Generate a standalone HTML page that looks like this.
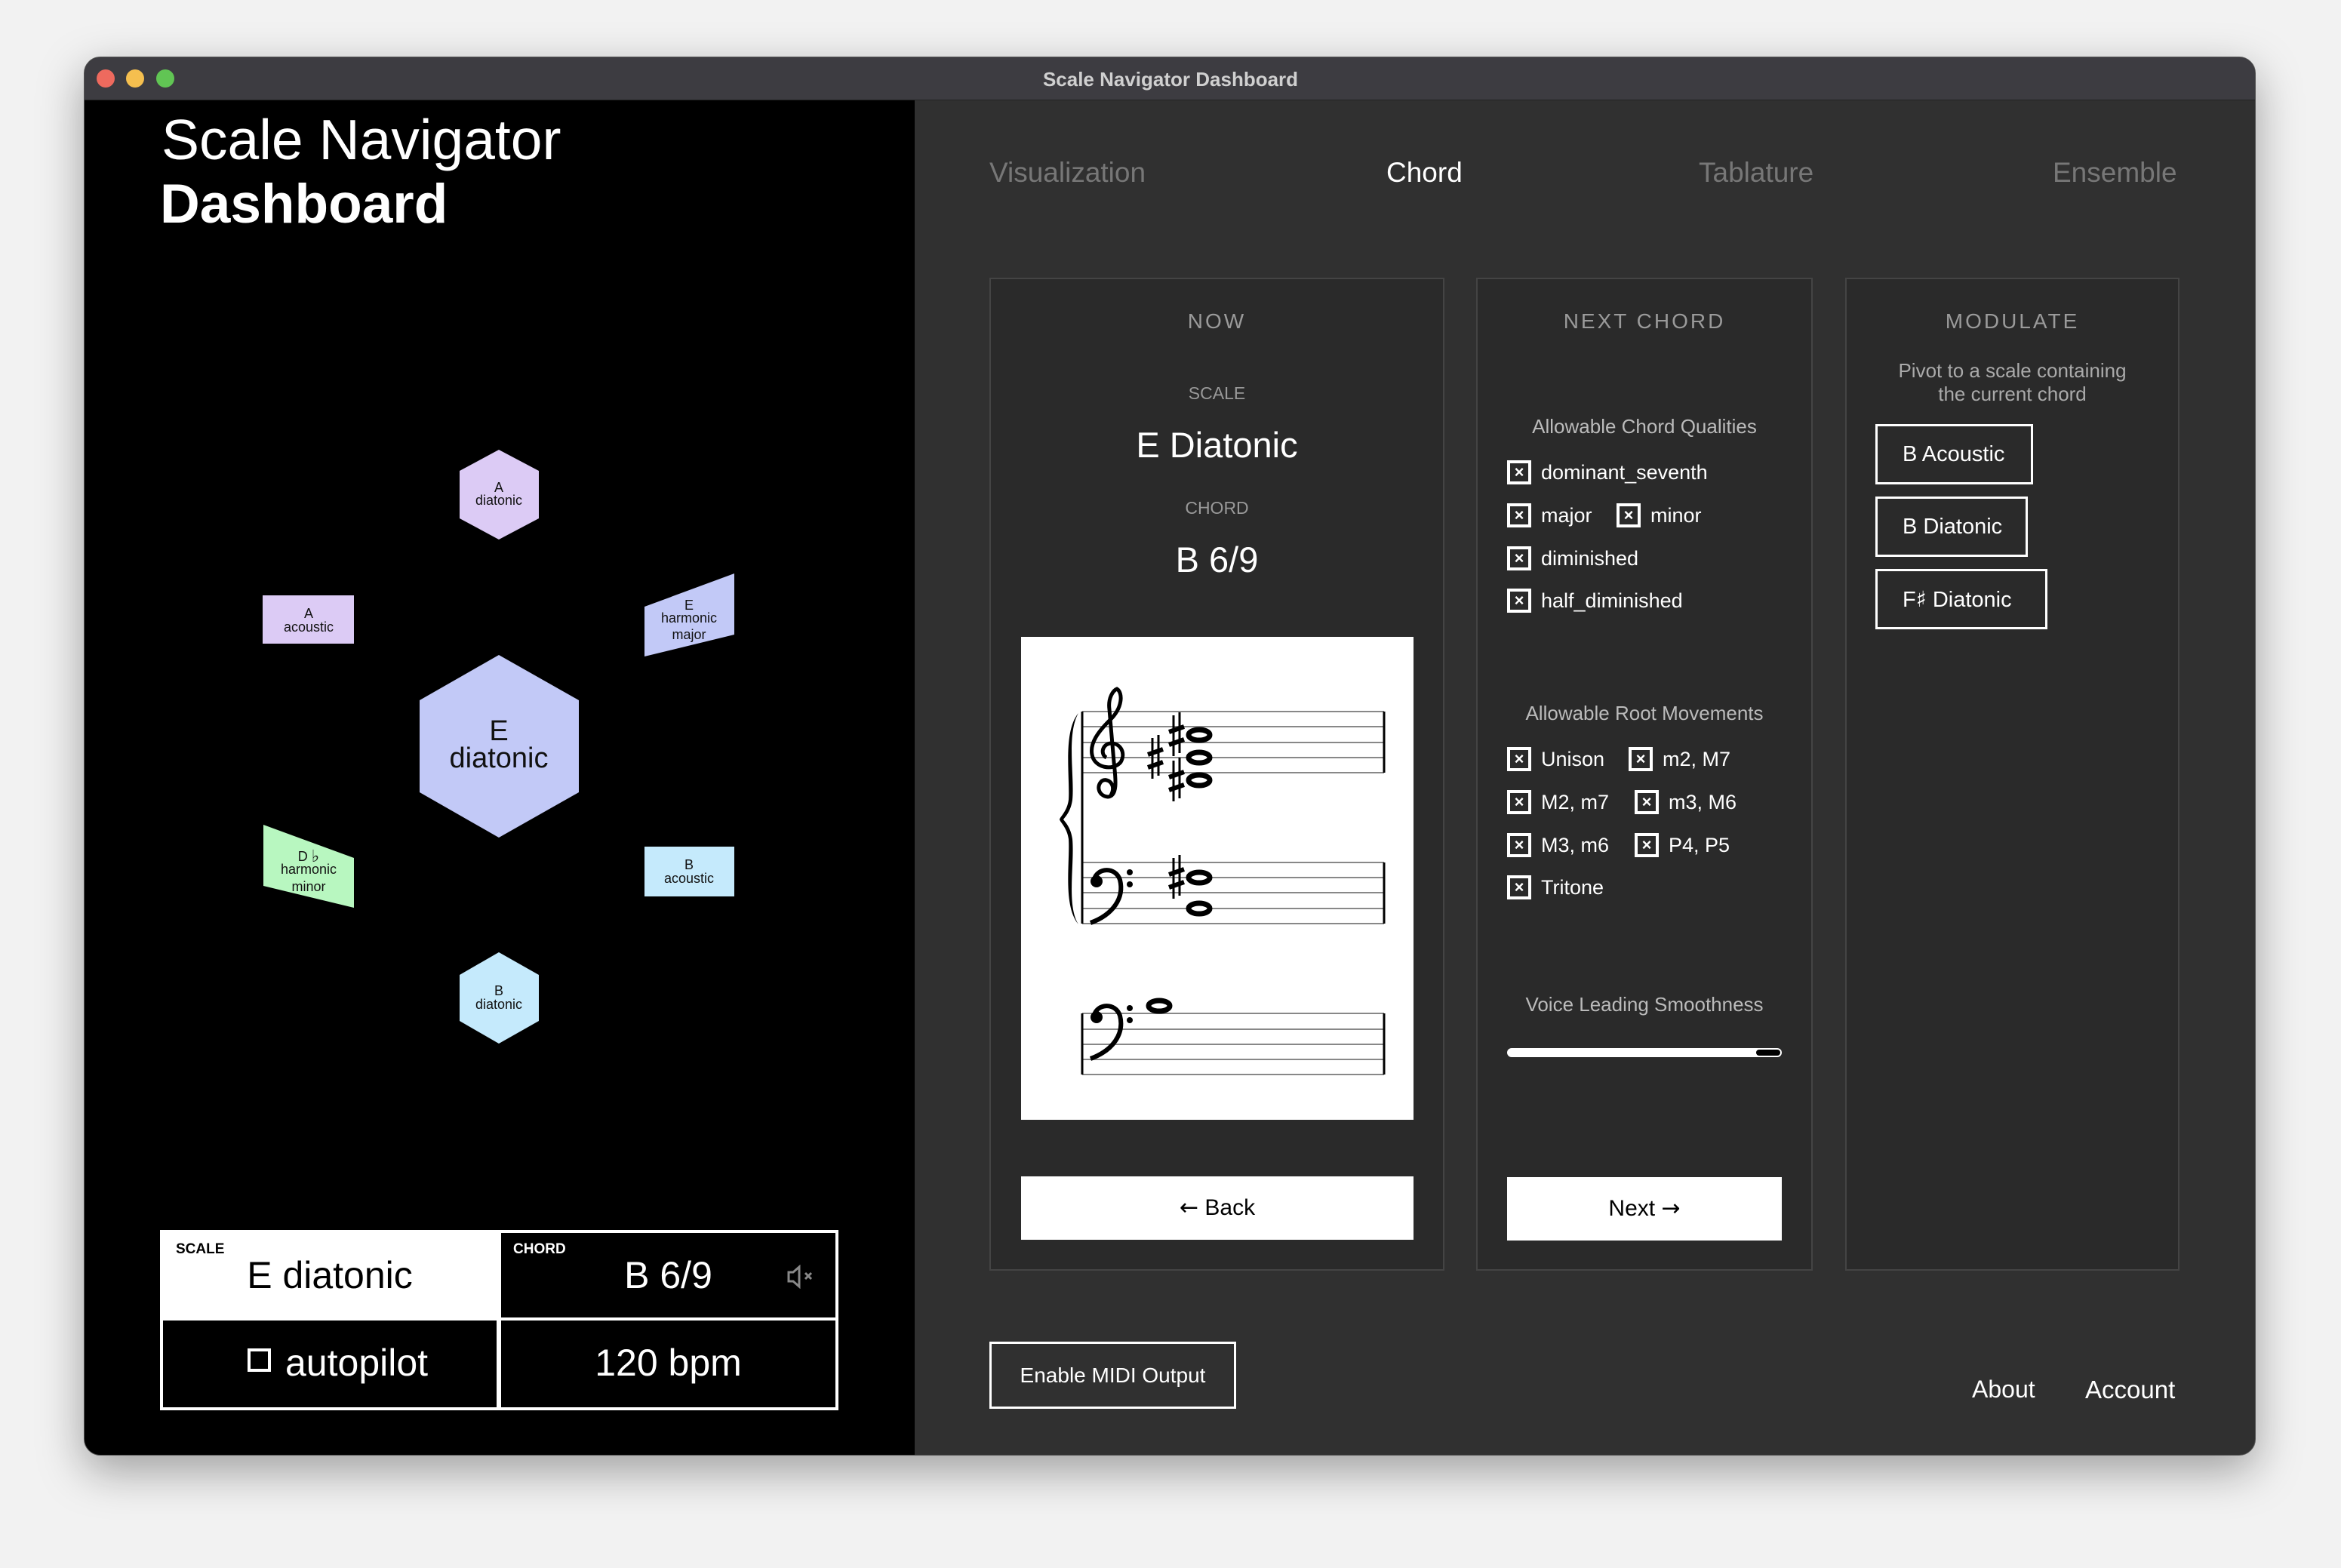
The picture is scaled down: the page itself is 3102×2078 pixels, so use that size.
<!DOCTYPE html>
<html><head><meta charset="utf-8">
<style>
*{margin:0;padding:0;box-sizing:border-box}
body{width:3102px;height:2078px;background:#f2f2f2;position:relative;overflow:hidden;font-family:"Liberation Sans",sans-serif}
.a{position:absolute}
.win{left:111px;top:75px;width:2878px;height:1854px;border-radius:22px;overflow:hidden;background:#303030;box-shadow:0 20px 60px rgba(0,0,0,.35);border:1px solid #555}
.c{text-align:center}
.card{background:#2a2a2a;border:2px solid #444}
.ct{color:#9a9a9a;font-size:28px;letter-spacing:3px;text-align:center;width:100%;}
.cb{width:32px;height:32px;border:4px solid #fff;color:#fff;font-size:22px;font-weight:bold;line-height:24px;text-align:center}
.lbl{color:#fff;font-size:27px;line-height:32px}
.mb{border:3px solid #fff;color:#fff;font-size:29px;line-height:74px;padding-left:33px}
.ar{font-family:"DejaVu Sans",sans-serif;font-size:30px}
</style></head><body>
<div class="a win">
  <div class="a" style="left:0;top:0;width:2878px;height:57px;background:#3d3c41;border-bottom:1px solid #222"></div>
  <div class="a" style="left:16px;top:16px;width:24px;height:24px;border-radius:50%;background:#ee6a5e"></div>
  <div class="a" style="left:55px;top:16px;width:24px;height:24px;border-radius:50%;background:#f5bf4f"></div>
  <div class="a" style="left:95px;top:16px;width:24px;height:24px;border-radius:50%;background:#61c554"></div>
  <div class="a c" style="left:0;top:14px;width:2878px;color:#d0d0d0;font-size:26px;font-weight:bold">Scale Navigator Dashboard</div>
  <div class="a" style="left:0;top:57px;width:1100px;height:1800px;background:#000"></div>
</div>

<div class="a" style="left:214px;top:142px;color:#fff;font-size:75px;line-height:86px">Scale Navigator</div>
<div class="a" style="left:212px;top:228px;color:#fff;font-size:73px;line-height:86px;font-weight:bold">Dashboard</div>

<svg class="a" style="left:0;top:0" width="3102" height="2078" font-family="Liberation Sans, sans-serif">
  <polygon points="661,868 767,928 767,1050 661,1110 556,1050 556,928" fill="#c2c9f7"/>
  <polygon points="661,596 714,624 714,687 661,715 609,687 609,624" fill="#dccbf5"/>
  <polygon points="661,1262 714,1292 714,1353 661,1383 609,1353 609,1292" fill="#c5eafc"/>
  <rect x="348" y="789" width="121" height="64" fill="#dccbf5"/>
  <polygon points="854,804 973,760 973,841 854,870" fill="#c2c9f7"/>
  <polygon points="349,1093 469,1137 469,1203 349,1174" fill="#b8f7c0"/>
  <rect x="854" y="1122" width="119" height="66" fill="#c5eafc"/>
  <g fill="#111" font-size="18" text-anchor="middle" dominant-baseline="central">
    <text x="661" y="646">A</text><text x="661" y="663">diatonic</text>
    <text x="409" y="813">A</text><text x="409" y="831">acoustic</text>
    <text x="913" y="802">E</text><text x="913" y="819">harmonic</text><text x="913" y="841">major</text>
    <text x="409" y="1135">D <tspan font-family="DejaVu Sans" font-size="22">♭</tspan></text><text x="409" y="1152">harmonic</text><text x="409" y="1175">minor</text>
    <text x="913" y="1146">B</text><text x="913" y="1164">acoustic</text>
    <text x="661" y="1313">B</text><text x="661" y="1331">diatonic</text>
    <text x="661" y="969" font-size="38">E</text><text x="661" y="1005" font-size="38">diatonic</text>
  </g>
</svg>

<!-- bottom grid -->
<div class="a" style="left:212px;top:1630px;width:899px;height:239px;background:#fff"></div>
<div class="a" style="left:664px;top:1634px;width:443px;height:112px;background:#000"></div>
<div class="a" style="left:216px;top:1750px;width:442px;height:115px;background:#000"></div>
<div class="a" style="left:664px;top:1750px;width:443px;height:115px;background:#000"></div>
<div class="a" style="left:233px;top:1645px;font-size:19px;font-weight:bold;color:#000">SCALE</div>
<div class="a" style="left:680px;top:1645px;font-size:19px;font-weight:bold;color:#fff">CHORD</div>
<div class="a c" style="left:216px;top:1662px;width:442px;font-size:50px;color:#000;line-height:56px">E diatonic</div>
<div class="a c" style="left:664px;top:1662px;width:443px;font-size:50px;color:#fff;line-height:56px">B 6/9</div>
<svg class="a" style="left:1040px;top:1676px" width="50" height="32"><path d="M5 10h6l8-7v26l-8-7H5z" fill="none" stroke="#888" stroke-width="3"/><path d="M27 11l8 8M35 11l-8 8" stroke="#888" stroke-width="3"/></svg>
<div class="a" style="left:328px;top:1787px;width:31px;height:31px;border:4px solid #fff"></div>
<div class="a" style="left:378px;top:1778px;font-size:50px;color:#fff;line-height:56px">autopilot</div>
<div class="a c" style="left:664px;top:1778px;width:443px;font-size:50px;color:#fff;line-height:56px">120 bpm</div>

<!-- tabs -->
<div class="a" style="left:1311px;top:208px;font-size:37px;color:#777">Visualization</div>
<div class="a" style="left:1837px;top:208px;font-size:37px;color:#fff">Chord</div>
<div class="a" style="left:2251px;top:208px;font-size:37px;color:#777">Tablature</div>
<div class="a" style="left:2720px;top:208px;font-size:37px;color:#777">Ensemble</div>

<!-- NOW card -->
<div class="a card" style="left:1311px;top:368px;width:603px;height:1316px"></div>
<div class="a ct" style="left:1311px;top:410px;width:603px">NOW</div>
<div class="a c" style="left:1311px;top:508px;width:603px;font-size:23px;color:#999">SCALE</div>
<div class="a c" style="left:1311px;top:562px;width:603px;font-size:47px;color:#fff">E Diatonic</div>
<div class="a c" style="left:1311px;top:660px;width:603px;font-size:23px;color:#999">CHORD</div>
<div class="a c" style="left:1311px;top:714px;width:603px;font-size:47px;color:#fff">B 6/9</div>
<div class="a" style="left:1353px;top:844px;width:520px;height:640px;background:#fff"></div>
<svg class="a" style="left:0;top:0" width="3102" height="2078">
  <defs>
    <g id="sh">
      <path d="M-4 -26V28M4 -30V24" stroke="#000" stroke-width="3"/>
      <path d="M-10 -4L10 -11M-10 13L10 6" stroke="#000" stroke-width="6"/>
    </g>
  </defs>
  <g stroke="#888" stroke-width="2">
    <path d="M1434 943H1834M1434 963H1834M1434 984H1834M1434 1004H1834M1434 1024H1834"/>
    <path d="M1434 1143H1834M1434 1163H1834M1434 1183H1834M1434 1204H1834M1434 1224H1834"/>
    <path d="M1434 1343H1834M1434 1364H1834M1434 1384H1834M1434 1404H1834M1434 1424H1834"/>
  </g>
  <g stroke="#000" stroke-width="3">
    <path d="M1434 943V1224M1834 943V1024M1834 1143V1224M1434 1343V1424M1834 1343V1424"/>
  </g>
  <path d="M1429 945C1408 970 1418 1030 1416 1060C1414 1075 1405 1082 1404 1086C1405 1090 1414 1097 1416 1112C1418 1142 1408 1200 1429 1225C1413 1200 1424 1145 1421 1112C1419 1097 1412 1090 1409 1086C1412 1082 1419 1075 1421 1060C1424 1030 1413 973 1429 945Z" fill="#000"/>
  <!-- treble clef -->
  <path d="M1472 1054C1480 1040 1468 1030 1460 1035C1452 1042 1456 1055 1468 1056C1482 1055 1478 1030 1476 1010L1470 940C1468 925 1475 915 1480 913C1488 918 1488 938 1470 955C1455 970 1444 985 1447 1000C1450 1018 1475 1022 1485 1010C1492 998 1485 985 1472 985C1460 986 1458 1000 1466 1004" fill="none" stroke="#000" stroke-width="5"/>
  <!-- bass clefs -->
  <g fill="none" stroke="#000" stroke-width="6">
    <path d="M1445 1223C1475 1212 1490 1190 1484 1166C1478 1148 1454 1150 1450 1165"/>
    <path d="M1445 1403C1475 1392 1490 1370 1484 1346C1478 1328 1454 1330 1450 1345"/>
  </g>
  <g fill="#000">
    <circle cx="1453" cy="1168" r="8"/><circle cx="1497" cy="1156" r="4"/><circle cx="1497" cy="1172" r="4"/>
    <circle cx="1453" cy="1348" r="8"/><circle cx="1497" cy="1336" r="4"/><circle cx="1497" cy="1352" r="4"/>
  </g>
  <g fill="#fff" stroke="#000" stroke-width="7">
    <ellipse cx="1589" cy="974" rx="14" ry="7"/><ellipse cx="1589" cy="1004" rx="14" ry="7"/><ellipse cx="1589" cy="1034" rx="14" ry="7"/>
    <ellipse cx="1589" cy="1163" rx="14" ry="7"/><ellipse cx="1589" cy="1204" rx="14" ry="7"/>
    <ellipse cx="1536" cy="1333" rx="14" ry="7"/>
  </g>
  <use href="#sh" x="1531" y="1004"/><use href="#sh" x="1559" y="974"/><use href="#sh" x="1559" y="1034"/><use href="#sh" x="1559" y="1163"/>
</svg>
<div class="a c" style="left:1353px;top:1559px;width:520px;height:84px;background:#fff;font-size:30px;line-height:84px;color:#000"><span class="ar">←</span> Back</div>

<!-- NEXT CHORD card -->
<div class="a card" style="left:1956px;top:368px;width:446px;height:1316px"></div>
<div class="a ct" style="left:1956px;top:410px;width:446px">NEXT CHORD</div>
<div class="a c" style="left:1956px;top:550px;width:446px;font-size:26px;color:#bbb">Allowable Chord Qualities</div>
<div class="a cb" style="left:1997px;top:610px">×</div><div class="a lbl" style="left:2042px;top:610px">dominant_seventh</div>
<div class="a cb" style="left:1997px;top:667px">×</div><div class="a lbl" style="left:2042px;top:667px">major</div>
<div class="a cb" style="left:2142px;top:667px">×</div><div class="a lbl" style="left:2187px;top:667px">minor</div>
<div class="a cb" style="left:1997px;top:724px">×</div><div class="a lbl" style="left:2042px;top:724px">diminished</div>
<div class="a cb" style="left:1997px;top:780px">×</div><div class="a lbl" style="left:2042px;top:780px">half_diminished</div>
<div class="a c" style="left:1956px;top:930px;width:446px;font-size:26px;color:#bbb">Allowable Root Movements</div>
<div class="a cb" style="left:1997px;top:990px">×</div><div class="a lbl" style="left:2042px;top:990px">Unison</div>
<div class="a cb" style="left:2158px;top:990px">×</div><div class="a lbl" style="left:2203px;top:990px">m2, M7</div>
<div class="a cb" style="left:1997px;top:1047px">×</div><div class="a lbl" style="left:2042px;top:1047px">M2, m7</div>
<div class="a cb" style="left:2166px;top:1047px">×</div><div class="a lbl" style="left:2211px;top:1047px">m3, M6</div>
<div class="a cb" style="left:1997px;top:1104px">×</div><div class="a lbl" style="left:2042px;top:1104px">M3, m6</div>
<div class="a cb" style="left:2166px;top:1104px">×</div><div class="a lbl" style="left:2211px;top:1104px">P4, P5</div>
<div class="a cb" style="left:1997px;top:1160px">×</div><div class="a lbl" style="left:2042px;top:1160px">Tritone</div>
<div class="a c" style="left:1956px;top:1316px;width:446px;font-size:26px;color:#bbb">Voice Leading Smoothness</div>
<div class="a" style="left:1997px;top:1389px;width:364px;height:12px;border-radius:6px;background:#fff"></div>
<div class="a" style="left:2327px;top:1391px;width:32px;height:8px;border-radius:4px;background:#000"></div>
<div class="a c" style="left:1997px;top:1560px;width:364px;height:84px;background:#fff;font-size:30px;line-height:84px;color:#000">Next <span class="ar">→</span></div>

<!-- MODULATE card -->
<div class="a card" style="left:2445px;top:368px;width:443px;height:1316px"></div>
<div class="a ct" style="left:2445px;top:410px;width:443px">MODULATE</div>
<div class="a c" style="left:2445px;top:476px;width:443px;font-size:26px;color:#aaa;line-height:31px">Pivot to a scale containing<br>the current chord</div>
<div class="a mb" style="left:2485px;top:562px;width:209px;height:80px">B Acoustic</div>
<div class="a mb" style="left:2485px;top:658px;width:202px;height:80px">B Diatonic</div>
<div class="a mb" style="left:2485px;top:754px;width:228px;height:80px">F<span style="font-family:'DejaVu Sans',sans-serif">♯</span> Diatonic</div>

<div class="a" style="left:1311px;top:1778px;width:327px;height:89px;border:3px solid #fff;color:#fff;font-size:28px;line-height:83px;text-align:center">Enable MIDI Output</div>
<div class="a" style="left:2613px;top:1823px;font-size:32px;color:#fff">About</div>
<div class="a" style="left:2763px;top:1823px;font-size:33px;color:#fff">Account</div>
</body></html>
